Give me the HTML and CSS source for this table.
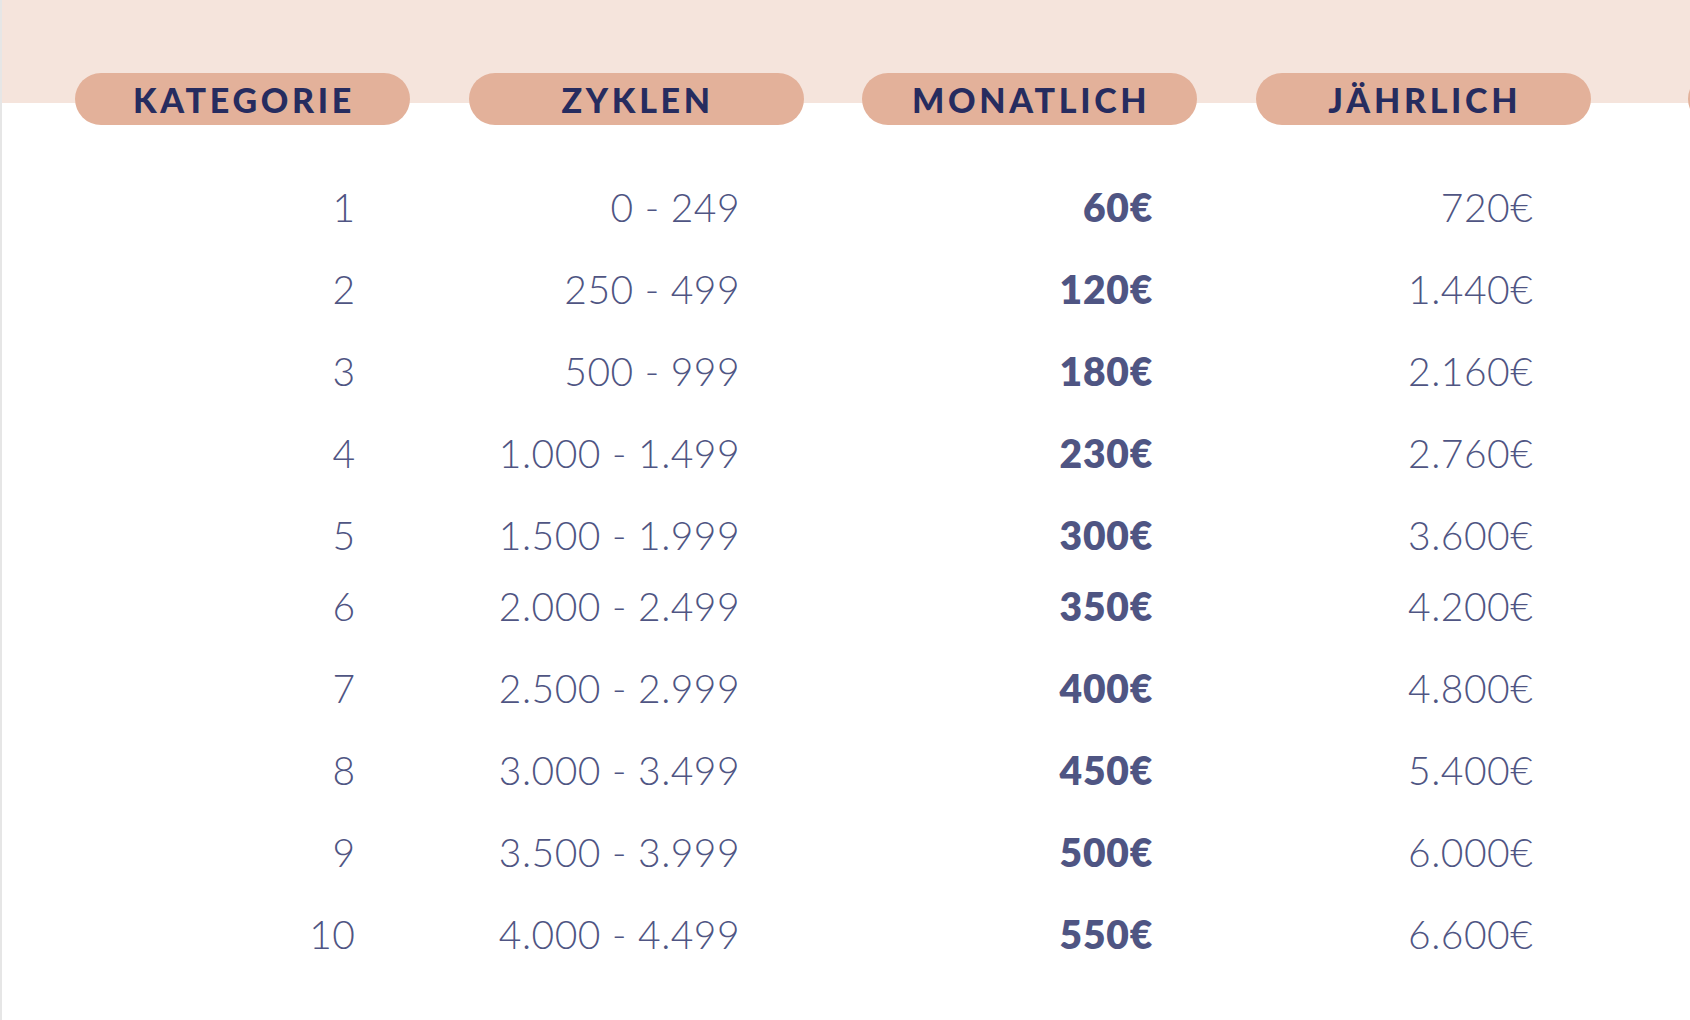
FILE: index.html
```html
<!DOCTYPE html>
<html lang="de">
<head>
<meta charset="utf-8">
<title>Preise</title>
<link rel="stylesheet" href="styles.css">
</head>
<body>
<main class="page">
  <div class="head">
    <div class="pill">KATEGORIE</div>
    <div class="pill">ZYKLEN</div>
    <div class="pill">MONATLICH</div>
    <div class="pill">JÄHRLICH</div>
    <div class="pill pill-edge"></div>
  </div>
  <div class="rows">
    <div class="row"><span class="c1">1</span><span class="c2">0 - 249</span><span class="c3">60€</span><span class="c4">720€</span></div>
    <div class="row"><span class="c1">2</span><span class="c2">250 - 499</span><span class="c3">120€</span><span class="c4">1.440€</span></div>
    <div class="row"><span class="c1">3</span><span class="c2">500 - 999</span><span class="c3">180€</span><span class="c4">2.160€</span></div>
    <div class="row"><span class="c1">4</span><span class="c2">1.000 - 1.499</span><span class="c3">230€</span><span class="c4">2.760€</span></div>
    <div class="row"><span class="c1">5</span><span class="c2">1.500 - 1.999</span><span class="c3">300€</span><span class="c4">3.600€</span></div>
    <div class="row row-tight"><span class="c1">6</span><span class="c2">2.000 - 2.499</span><span class="c3">350€</span><span class="c4">4.200€</span></div>
    <div class="row"><span class="c1">7</span><span class="c2">2.500 - 2.999</span><span class="c3">400€</span><span class="c4">4.800€</span></div>
    <div class="row"><span class="c1">8</span><span class="c2">3.000 - 3.499</span><span class="c3">450€</span><span class="c4">5.400€</span></div>
    <div class="row"><span class="c1">9</span><span class="c2">3.500 - 3.999</span><span class="c3">500€</span><span class="c4">6.000€</span></div>
    <div class="row"><span class="c1">10</span><span class="c2">4.000 - 4.499</span><span class="c3">550€</span><span class="c4">6.600€</span></div>
  </div>
</main>
</body>
</html>
```
FILE: styles.css
```css
html, body {
  margin: 0;
  padding: 0;
  height: 100%;
}
body {
  border-left: 2px solid #e6e6e6;
  box-sizing: border-box;
  overflow: hidden;
  background: #ffffff;
  font-family: "Lato", "Liberation Sans", sans-serif;
}
.page {
  min-height: 100%;
  background: linear-gradient(#f5e4dc 0, #f5e4dc 103px, #ffffff 103px);
  padding: 73px 0 0 73px;
  box-sizing: border-box;
}
.head {
  display: grid;
  grid-template-columns: 335px 335px 335px 335px 120px;
  column-gap: 58.6px;
  height: 52px;
}
.pill {
  background: #e3b19a;
  border-radius: 26px;
  height: 52px;
  display: flex;
  align-items: center;
  justify-content: center;
  color: #262c5f;
  font-weight: 900;
  font-size: 34px;
  letter-spacing: 3.7px;
  padding-left: 3px;
}
.pill-edge {
  width: 60px;
  margin-left: 38.5px;
  padding-left: 0;
}
.rows {
  padding-top: 41px;
}
.row {
  display: grid;
  grid-template-columns: 335px 335px 335px 335px;
  column-gap: 58.6px;
  height: 82px;
  line-height: 82px;
  font-size: 39px;
  font-weight: 300;
  letter-spacing: 0.5px;
  color: #4f5583;
  text-align: right;
}
.row-tight {
  margin-top: -11px;
}
.c1 { padding-right: 54.5px; }
.c2 { padding-right: 63.5px; }
.c3 { padding-right: 44px; font-weight: 800; letter-spacing: 0.8px; }
.c4 { padding-right: 57.5px; }
```
